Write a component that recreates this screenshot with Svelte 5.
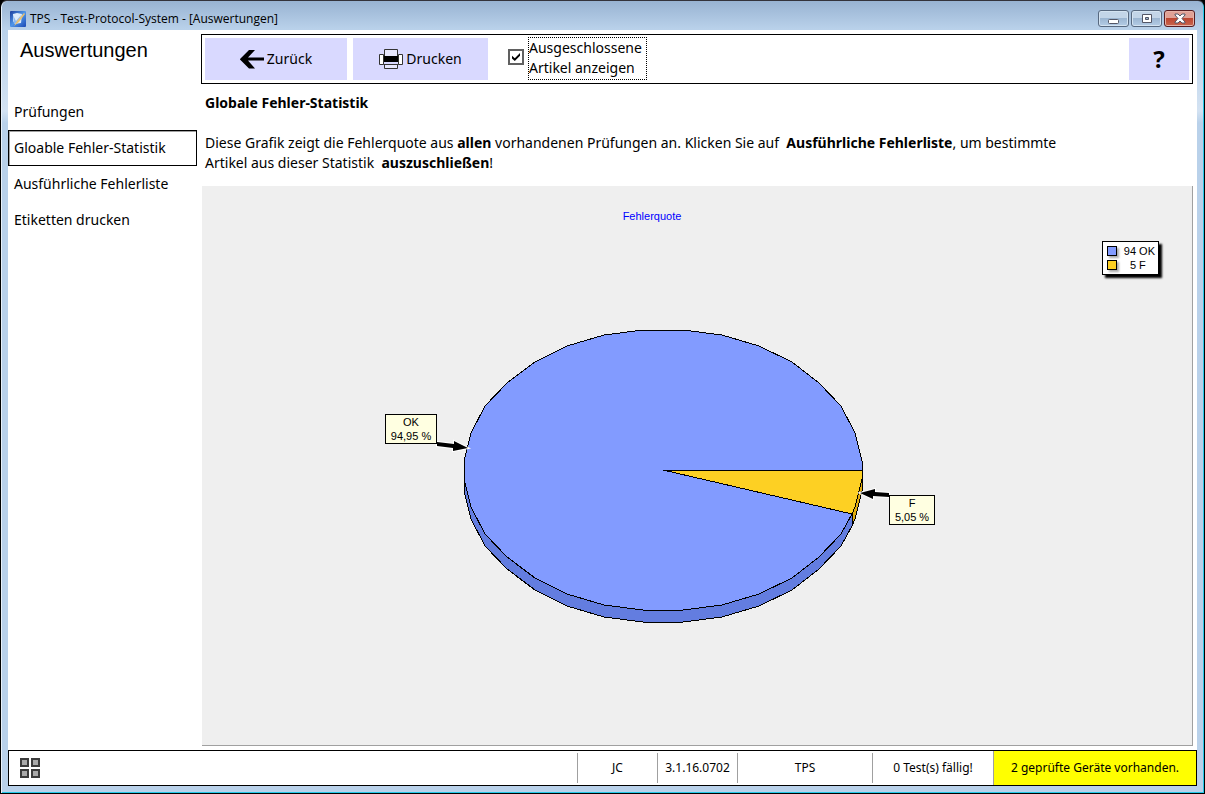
<script lang="ts">
	let showExcluded = true;
	let active = 'Gloable Fehler-Statistik';

	const menu = ['Prüfungen', 'Gloable Fehler-Statistik', 'Ausführliche Fehlerliste', 'Etiketten drucken'];

	const cx = 461;
	const cy = 284;
	const rx = 199;
	const ry = 141;
	const depth = 12;
	const split = 341.8;

	// corner angles, the lower half mirrors the upper one
	const upper = Array.from({ length: 16 }, (_, i) => 3.8 + i * 11.49);
	const corners = [...upper, ...upper.map((a) => 360 - a).reverse()];

	function point(deg: number, dy = 0) {
		const a = (deg * Math.PI) / 180;
		return `${Math.round(cx + rx * Math.cos(a))},${Math.round(cy - ry * Math.sin(a) + dy)}`;
	}

	function range(from: number, to: number) {
		return [from, ...corners.filter((a) => a > from && a < to), to];
	}

	function side(from: number, to: number) {
		const list = range(from, to);
		return [...list.map((a) => point(a)), ...list.reverse().map((a) => point(a, depth))].join(' ');
	}

	const okTop = [`${cx},${cy}`, ...range(0, split).map((a) => point(a))].join(' ');
	const failTop = [`${cx},${cy}`, ...range(split, 360).map((a) => point(a))].join(' ');
	const okSide = side(180, split);
	const failSide = side(split, 360);
</script>

<div class="window">
	<header class="titlebar">
		<svg class="titlebar__icon" width="16" height="16" viewBox="0 0 16 16">
			<defs>
				<linearGradient id="app-blue" x1="0" y1="0" x2="1" y2="1">
					<stop offset="0" stop-color="#1b3f9e" />
					<stop offset="0.5" stop-color="#4f96ea" />
					<stop offset="1" stop-color="#1c48b4" />
				</linearGradient>
			</defs>
			<rect width="16" height="16" rx="1" fill="url(#app-blue)" />
			<path d="M3 3l4-1 5 1-1 9-6 1-2-3z" fill="#dcebfb" />
			<path d="M3 4l3 6 6-7-5 9-3 1z" fill="#8bb8f0" />
			<path d="M14 2L7 10l-3 5 5-4 6-8z" fill="#e8c070" />
		</svg>
		<span class="titlebar__title">TPS - Test-Protocol-System - [Auswertungen]</span>
		<div class="titlebar__controls">
			<button class="control" aria-label="Minimieren">
				<svg width="12" height="12" viewBox="0 0 12 12"><rect x="0.5" y="6.5" width="10" height="4" rx="1" fill="#fff" stroke="#535666" /></svg>
			</button>
			<button class="control" aria-label="Maximieren">
				<svg width="12" height="12" viewBox="0 0 12 12"><path d="M1.5 1.5h9v8h-9z" fill="#fff" stroke="#535666" /><path d="M4.5 4.5h3v2h-3z" fill="#9db5d0" stroke="#535666" /></svg>
			</button>
			<button class="control control--close" aria-label="Schließen">
				<svg width="12" height="12" viewBox="0 0 12 12"><path d="M1 1h3l2 2 2-2h3v1L8 5.500l3 3.500v1H8L6 8l-2 2H1V9l3-3.500L1 2z" fill="#fff" stroke="#535666" /></svg>
			</button>
		</div>
	</header>

	<div class="client">
		<div class="body">
			<aside class="sidebar">
				<h1 class="sidebar__title">Auswertungen</h1>
				<nav class="sidebar__menu">
					{#each menu as item}
						<button class="sidebar__item" class:active={item === active} on:click={() => (active = item)}>{item}</button>
					{/each}
				</nav>
			</aside>

			<main class="main">
				<div class="toolbar">
					<button class="tool tool--back">
						<svg width="24" height="19" viewBox="0 0 24 19"><path d="M9 0h6L8 7.500h16v3H8l7 8H9L0 9.500V9z" /></svg>
						Zurück
					</button>
					<button class="tool tool--print">
						<svg width="24" height="20" viewBox="0 0 24 20">
							<path d="M5.500.5h13v8h-13z" fill="#e8e8ff" stroke="#333" />
							<path d="M4.500 5.500h-4v10h4zM19.500 5.500h4v10h-4z" fill="#fff" stroke="#333" />
							<path d="M5 7h14v6H5z" />
							<path d="M4.500 15.500h15M5.500 15.500h13v4h-13z" fill="#e8e8ff" stroke="#333" />
						</svg>
						Drucken
					</button>
					<label class="check">
						<input type="checkbox" bind:checked={showExcluded} />
						<span class="check__label">Ausgeschlossene<br />Artikel anzeigen</span>
					</label>
					<button class="tool tool--help" aria-label="Hilfe">?</button>
				</div>

				<section class="intro">
					<h2>Globale Fehler-Statistik</h2>
					<p>
						Diese Grafik zeigt die Fehlerquote aus <b>allen</b> vorhandenen Prüfungen an. Klicken Sie auf &nbsp;<b>Ausführliche Fehlerliste</b>, um bestimmte<br />
						Artikel aus dieser Statistik &nbsp;<b>auszuschließen</b>!
					</p>
				</section>

				<div class="chart">
					<svg class="chart__svg" viewBox="0 0 990 559" role="img" aria-label="Fehlerquote">
						<text class="chart__title" x="450" y="34">Fehlerquote</text>

						<g stroke="#000" stroke-linejoin="round" shape-rendering="crispEdges">
							<polygon points={okSide} fill="#637de0" />
							<polygon points={failSide} fill="#e0ac10" />
							<polygon points={okTop} fill="#829bff" />
							<polygon points={failTop} fill="#fdd023" />
						</g>

						<path d="M235 256l17 2v-3l14 7-15 3v-3l-16-2z" stroke="#fff" stroke-width="2" paint-order="stroke" />
						<path d="M687 307l-14-1v-3l-15 4 13 6v-3l16 1z" stroke="#fff" stroke-width="2" paint-order="stroke" />
						<g class="chart__mark">
							<rect x="183.500" y="228.500" width="51" height="29" />
							<text x="209" y="240">OK</text>
							<text x="209" y="254">94,95 %</text>
							<rect x="687.500" y="309.500" width="45" height="29" />
							<text x="710" y="321">F</text>
							<text x="710" y="335">5,05 %</text>
						</g>
					</svg>
					<table class="legend">
						<tbody>
							<tr><td><i class="swatch swatch--ok"></i></td><td class="legend__count">94</td><td>OK</td></tr>
							<tr><td><i class="swatch swatch--fail"></i></td><td class="legend__count">5</td><td>F</td></tr>
						</tbody>
					</table>
				</div>
			</main>
		</div>

		<footer class="status">
			<button class="status__apps" aria-label="Übersicht">
				<svg width="20" height="20" viewBox="0 0 20 20" fill="#aaa" stroke="#3c3c3c" stroke-width="2">
					<path d="M1 1h7v7H1zM12 1h7v7h-7zM1 12h7v7H1zM12 12h7v7h-7z" />
				</svg>
			</button>
			<span class="status__cell status__cell--user">JC</span>
			<span class="status__cell status__cell--version">3.1.16.0702</span>
			<span class="status__cell status__cell--app">TPS</span>
			<span class="status__cell status__cell--tests">0 Test(s) fällig!</span>
			<span class="status__cell status__cell--devices">2 geprüfte Geräte vorhanden.</span>
		</footer>
	</div>
</div>

<style>
	:global(body) {
		margin: 0;
		background: #000;
	}

	.window,
	.window * {
		box-sizing: border-box;
	}

	.window {
		display: flex;
		flex-direction: column;
		min-height: 100vh;
		padding: 1px 7px 7px;
		border: 1px solid #000;
		border-top-color: #33333b;
		border-radius: 7px 7px 0 0;
		background: linear-gradient(#98b3d2, #b9d1ea 28px, #d3e2f2 110px, #b9d1ea 122px);
		box-shadow: inset 1px 0 #e8f1fa, inset -1px -1px #25c8e8;
		font-family: "Noto Sans", "Open Sans", sans-serif;
		font-size: 14px;
		line-height: 20px;
		color: #000;
	}

	button {
		margin: 0;
		padding: 0;
		border: 0;
		background: none;
		font: inherit;
		color: inherit;
	}

	.titlebar {
		display: flex;
		align-items: center;
		height: 28px;
		padding: 5px 2px 0;
	}

	.titlebar__title {
		margin-left: 4px;
		font-family: "Open Sans", sans-serif;
		font-size: 12px;
	}

	.titlebar__controls {
		display: flex;
		gap: 2px;
		margin-left: auto;
	}

	.control {
		display: flex;
		align-items: center;
		justify-content: center;
		width: 31px;
		height: 17px;
		border: 1px solid #57687f;
		border-radius: 3px;
		background: linear-gradient(#c3d5e8 50%, #9cb6d2 50%, #b4cce5);
		box-shadow: inset 0 0 0 1px #d4e3f1;
	}

	.control--close {
		border-color: #571d22;
		background: linear-gradient(#e0a196 50%, #bd4631 50%, #c9674f);
		box-shadow: inset 0 0 0 1px #e6b3a8;
	}

	.client {
		flex: 1;
		display: flex;
		flex-direction: column;
		background: #fff;
	}

	.body {
		flex: 1;
		display: flex;
	}

	.sidebar {
		width: 189px;
		flex: none;
	}

	.sidebar__title {
		margin: 8px 0 32px 12px;
		font: 20px/24px "Liberation Sans", Arial, sans-serif;
	}

	.sidebar__menu {
		display: flex;
		flex-direction: column;
	}

	.sidebar__item {
		height: 36px;
		padding-left: 5px;
		border: 1px solid transparent;
		text-align: left;
	}

	.sidebar__item.active {
		border-color: #000;
		box-shadow: inset 1px 1px #a0a0a0;
	}

	.main {
		flex: 1;
		display: flex;
		flex-direction: column;
		min-width: 0;
		padding: 4px;
	}

	.toolbar {
		display: flex;
		align-items: center;
		height: 50px;
		padding: 0 3px;
		border: 1px solid #000;
	}

	.tool {
		display: flex;
		align-items: center;
		justify-content: center;
		gap: 3px;
		height: 42px;
		background: #d9d9ff;
	}

	.tool--back {
		width: 142px;
		margin-right: 6px;
	}

	.tool--print {
		width: 135px;
	}

	.tool--help {
		width: 60px;
		margin-left: auto;
		font-size: 24px;
		font-weight: 700;
	}

	.check {
		display: flex;
		align-items: center;
		gap: 4px;
		margin: 0 0 2px 20px;
	}

	.check input {
		appearance: none;
		display: grid;
		place-items: center;
		width: 16px;
		height: 16px;
		margin: 0 0 2px;
		border: 2px solid #606060;
		background: #fff;
	}

	.check input:checked::before {
		content: '';
		width: 8px;
		height: 8px;
		background: #000;
		clip-path: polygon(0 35%, 35% 65%, 100% 0, 100% 35%, 35% 100%, 0 70%);
	}

	.check__label {
		padding: 0 4px 1px 0;
		border: 1px dotted #000;
	}

	.intro {
		padding: 9px 120px 13px 4px;
	}

	.intro h2 {
		margin: 0 0 20px;
		font-size: 14px;
		line-height: 20px;
	}

	.intro p {
		margin: 0;
	}

	.chart {
		position: relative;
		flex: 1;
		display: flex;
		margin-left: 1px;
		border: solid #a0a0a0;
		border-width: 0 1px 1px 0;
		background: #efefef;
	}

	.chart__svg {
		width: 100%;
		font: 11px "Liberation Sans", Arial, sans-serif;
		text-anchor: middle;
	}

	.chart__title {
		fill: #00f;
	}

	.chart__mark rect {
		fill: #ffffe1;
		stroke: #000;
	}

	.legend {
		position: absolute;
		top: 55px;
		right: 33px;
		padding: 2px 3px;
		border: 1px solid #000;
		border-spacing: 0;
		background: #fff;
		box-shadow: 3px 3px 2px #000;
		font: 11px/14px "Liberation Sans", Arial, sans-serif;
	}

	.legend td {
		padding: 0 1px;
	}

	.legend td:last-child {
		padding: 0 0 0 2px;
	}

	.legend__count {
		width: 19px;
		text-align: right;
	}

	.swatch {
		display: block;
		width: 10px;
		height: 10px;
		border: 1px solid #000;
		box-shadow: 2px 2px 2px #aaa;
	}

	.swatch--ok {
		background: #829bff;
	}

	.swatch--fail {
		background: #fdd023;
	}

	.status {
		display: flex;
		height: 36px;
		border: 1px solid #000;
		font-size: 12px;
	}

	.status__apps {
		display: flex;
		align-items: center;
		margin: 0 auto 0 11px;
	}

	.status__cell {
		display: flex;
		align-items: center;
		justify-content: center;
		margin: 2px 0;
		border-left: 1px solid #a0a0a0;
		white-space: nowrap;
	}

	.status__cell--user,
	.status__cell--version {
		width: 80px;
	}

	.status__cell--app {
		width: 135px;
	}

	.status__cell--tests {
		width: 121px;
	}

	.status__cell--devices {
		width: 203px;
		margin: 0;
		background: #ff0;
	}
</style>
